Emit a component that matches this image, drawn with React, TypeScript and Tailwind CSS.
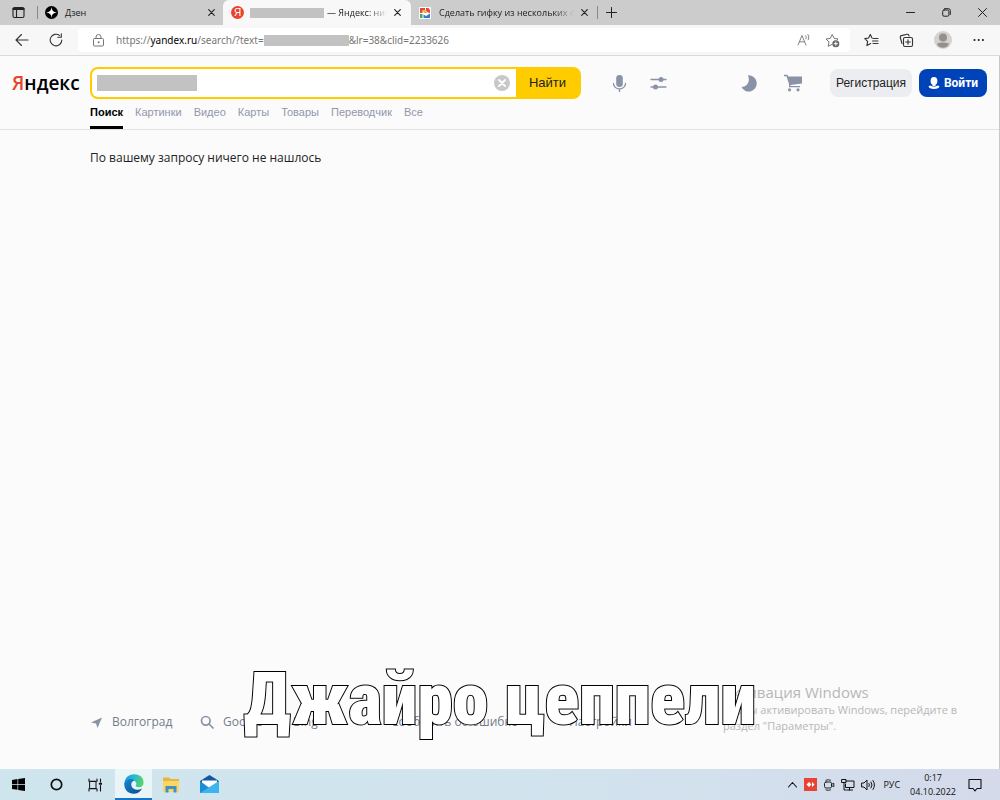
import type { ReactNode } from 'react';

const browserFont = "font-['Open_Sans','Noto_Sans',sans-serif]";
const pageFont = "font-['Liberation_Sans',sans-serif]";

const sections = ['Поиск', 'Картинки', 'Видео', 'Карты', 'Товары', 'Переводчик', 'Все'];

function Icon({ children, size = 16, box = 16, className = '' }: { children: ReactNode; size?: number; box?: number; className?: string }) {
  return (
    <svg
      width={size}
      height={size}
      viewBox={`0 0 ${box} ${box}`}
      fill="none"
      stroke="currentColor"
      strokeLinecap="round"
      strokeLinejoin="round"
      className={`block shrink-0 ${className}`}
    >
      {children}
    </svg>
  );
}

function CloseIcon() {
  return (
    <Icon size={7} box={8}>
      <path d="M.8.8l6.4 6.4M7.2.8L.8 7.2" strokeWidth="1.3" />
    </Icon>
  );
}

function TabBar() {
  return (
    <div className="flex h-[25px] items-center bg-[#cccccc] text-[9px] text-[#222]">
      <button aria-label="Меню вкладок" className="flex w-[37px] justify-center">
        <Icon size={13} box={13}>
          <rect x="1" y="1.5" width="11" height="10" rx="1.5" strokeWidth="1.1" />
          <path d="M1.3 3h10.4" strokeWidth="2" />
          <path d="M4.5 3v8.5" strokeWidth="1.1" />
        </Icon>
      </button>
      <div className="flex w-[186px] items-center border-l border-[#888] pr-2 pl-[7px]">
        <Icon size={13} box={14}>
          <circle cx="7" cy="7" r="7" fill="#000" stroke="none" />
          <path d="M7 1.2C7.2 5 9 6.8 12.8 7 9 7.2 7.2 9 7 12.8 6.8 9 5 7.2 1.2 7 5 6.8 6.8 5 7 1.2z" fill="#fff" stroke="none" />
        </Icon>
        <span className="ml-[7px] flex-1">Дзен</span>
        <button aria-label="Закрыть Дзен">
          <CloseIcon />
        </button>
      </div>
      <div className="flex h-full w-[188px] items-center rounded-t-md bg-[#f8f8f8] pr-[10px] pl-2">
        <span className={`${pageFont} flex size-[13px] shrink-0 items-center justify-center rounded-full bg-[#e8442c] text-[10px] leading-none text-white`}>
          Я
        </span>
        <span className="ml-[6px] h-[10px] w-[74px] shrink-0 bg-[#c2c2c2]" />
        <span className="ml-[3px] flex-1 overflow-hidden whitespace-nowrap [mask-image:linear-gradient(to_right,#000_70%,transparent)]">
          — Яндекс: нич
        </span>
        <button aria-label="Закрыть Яндекс" className="ml-[7px]">
          <CloseIcon />
        </button>
      </div>
      <div className="flex w-[187px] items-center border-r border-[#888] pr-[9px] pl-2">
        <Icon size={12} box={12}>
          <rect width="12" height="12" rx="1" fill="#fff" stroke="none" />
          <path d="M1 1h5v2.500H3.500V6H1z" fill="#e5483a" stroke="none" />
          <path d="M7 1h2.500L11 3v3L9 5.500 7 3.500z" fill="#e5483a" stroke="none" />
          <path d="M4 4l3-1 1.500 3H5z" fill="#f2b32e" stroke="none" />
          <path d="M1 7h2.500v4H1z" fill="#45a869" stroke="none" />
          <path d="M4.500 7.500l2.500 1.500 4-2.500V11H4.500z" fill="#3f76cf" stroke="none" />
        </Icon>
        <span className="ml-2 flex-1 overflow-hidden whitespace-nowrap [mask-image:linear-gradient(to_right,#000_85%,transparent)]">
          Сделать гифку из нескольких фото
        </span>
        <button aria-label="Закрыть вкладку" className="ml-[7px]">
          <CloseIcon />
        </button>
      </div>
      <button aria-label="Новая вкладка" className="ml-2">
        <Icon size={11} box={12}>
          <path d="M6 .5v11M.5 6h11" strokeWidth="1.1" />
        </Icon>
      </button>
      <div className="ml-auto flex">
        <button aria-label="Свернуть" className="flex w-9 justify-center">
          <Icon size={9} box={9}>
            <path d="M.5 4.5h8" />
          </Icon>
        </button>
        <button aria-label="Восстановить" className="flex w-9 justify-center">
          <Icon size={9} box={9}>
            <rect x=".7" y="2" width="6.2" height="6.2" rx="1.3" />
            <path d="M2.5.7h4a1.8 1.8 0 0 1 1.8 1.8v4" />
          </Icon>
        </button>
        <button aria-label="Закрыть" className="flex w-9 justify-center">
          <Icon size={9} box={9}>
            <path d="M.5.5l8 8M8.500.5l-8 8" />
          </Icon>
        </button>
      </div>
    </div>
  );
}

function Toolbar() {
  return (
    <div className="flex h-[31px] items-center border-b border-[#dadada] bg-[#f7f7f7] text-[#333]">
      <button aria-label="Назад" className="ml-[15px]">
        <Icon size={14} box={14}>
          <path d="M13 7H1.200M6.500 1.500L1 7l5.500 5.500" strokeWidth="1.1" />
        </Icon>
      </button>
      <button aria-label="Обновить" className="ml-5">
        <Icon size={14} box={14}>
          <path d="M12.800 7A5.800 5.800 0 1 1 10.500 2.400M12.300.7v3.500H8.800" strokeWidth="1.1" />
        </Icon>
      </button>
      <div className="mr-[14px] ml-[15px] flex h-[24px] flex-1 items-center rounded bg-white px-[14px] text-[#767676]">
        <Icon size={13} box={13}>
          <rect x="1.500" y="4.500" width="10" height="7.500" rx="1" />
          <path d="M4 4.500V3a2.500 2.500 0 0 1 5 0v1.500" />
          <circle cx="6.500" cy="8.200" r=".5" fill="currentColor" />
        </Icon>
        <p className="ml-[11px] flex flex-1 items-center font-['Noto_Sans',sans-serif] text-[10px] whitespace-nowrap">
          https://<span className="text-black">yandex.ru</span>/search/?text=
          <span className="h-[11px] w-[85px] bg-[#c2c2c2]" />
          &amp;lr=38&amp;clid=2233626
        </p>
        <button aria-label="Прочесть вслух" className="mr-[14px]">
          <Icon size={14} box={14}>
            <path d="M1 12L5 2.500 9 12M2.400 8.800h5.200M8.800 2.800q1 1.300.2 3M11 1.500q1.900 2.500.3 5.300" strokeWidth=".9" />
          </Icon>
        </button>
        <button aria-label="Добавить в избранное" className="-mr-1">
          <Icon size={15} box={15}>
            <path d="M12 7l1-1-3.800-.6L7.200 1.500 5.200 5.400 1 6l3 3-.8 4.300L7 11.400" />
            <circle cx="10.800" cy="10.700" r="3.500" fill="#666" stroke="none" />
            <path d="M10.800 9v3.400M9.100 10.700h3.400" stroke="#fff" />
          </Icon>
        </button>
      </div>
      <div className="mr-[14px] flex items-center gap-5">
        <button aria-label="Избранное">
          <Icon size={15} box={15}>
            <path d="M8 5L6.300 1.500 4.600 5 .8 5.600l2.800 2.700-.7 4.300 3.800-2M9 5.500h5M8.500 8h5.500M9 10.500h5" strokeWidth="1.100" />
          </Icon>
        </button>
        <button aria-label="Коллекции">
          <Icon size={15} box={15}>
            <rect x="4.500" y="4.500" width="9" height="9" rx="1.500" strokeWidth="1.100" />
            <path d="M9 6.700v4.600M6.700 9h4.600M3 10.500l-1.700-6A1.500 1.500 0 0 1 2.400 2.600L8 1.300a1.500 1.500 0 0 1 1.800 1l.3.700" strokeWidth="1.100" />
          </Icon>
        </button>
        <button aria-label="Профиль">
          <Icon size={18} box={18}>
            <circle cx="9" cy="9" r="9" fill="#d4d1ce" stroke="none" />
            <circle cx="9" cy="6.500" r="4" fill="#94908d" stroke="none" />
            <path d="M3 12.500q6-2 12 0-1.500 4.300-6 4.300t-6-4.300z" fill="#94908d" stroke="none" />
          </Icon>
        </button>
        <button aria-label="Параметры">
          <Icon size={14} box={14}>
            <g fill="#222" stroke="none">
              <circle cx="2.500" cy="7" r="1.100" />
              <circle cx="6.700" cy="7" r="1.100" />
              <circle cx="10.900" cy="7" r="1.100" />
            </g>
          </Icon>
        </button>
      </div>
    </div>
  );
}

function SearchHeader() {
  return (
    <header className={`${pageFont} border-b border-[#e2e2e2] bg-[#fbfbfb]`}>
      <div className="flex items-center pt-[11px] pr-3 pl-3">
        <a href="#" className="w-[78px] font-['Open_Sans',sans-serif] text-[19px] leading-7 font-semibold text-black">
          <span className="text-[#e8442c]">Я</span>ндекс
        </a>
        <form className="flex h-8 w-[491px] overflow-hidden rounded-lg bg-[#ffcc00] p-[2px]" onSubmit={(e) => e.preventDefault()}>
          <div className="relative flex flex-1 items-center rounded-l-md bg-white pr-[6px] pl-1">
            <input aria-label="Запрос" className="h-full w-full bg-transparent outline-none" />
            <span className="absolute left-[5px] h-4 w-[100px] bg-[#c2c2c2]" />
            <button type="button" aria-label="Очистить">
              <Icon size={16}>
                <circle cx="8" cy="8" r="8" fill="#c8c8c8" stroke="none" />
                <path d="M5 5l6 6M11 5l-6 6" stroke="#fff" strokeWidth="1.800" />
              </Icon>
            </button>
          </div>
          <button className="w-[63px] text-[13px] text-[#222]">Найти</button>
        </form>
        <div className="ml-[30px] flex items-center gap-[22px] text-[#8a92a8]">
          <button aria-label="Голосовой поиск">
            <Icon size={17} box={17}>
              <rect x="5.200" y="0" width="6.600" height="12" rx="3.300" fill="currentColor" stroke="none" />
              <path d="M2.500 8.500a6 5.500 0 0 0 12 0M8.500 14v2.500" strokeWidth="1.300" />
            </Icon>
          </button>
          <button aria-label="Настройки поиска">
            <Icon size={17} box={17}>
              <path d="M1 4.500h15M1 12h15" strokeWidth="1.300" />
              <circle cx="11" cy="4.500" r="2.500" fill="currentColor" stroke="none" />
              <circle cx="5.500" cy="12" r="2.500" fill="currentColor" stroke="none" />
            </Icon>
          </button>
        </div>
        <div className="ml-auto flex items-center text-[#8a92a8]">
          <button aria-label="Тёмная тема" className="mr-[26px]">
            <Icon size={17} box={17}>
              <path d="M7 .3C12 0 15.700 3.700 15.700 8.500a7.900 7.900 0 0 1-15.200 3.200C4.500 12.500 10 8 7 .3z" fill="currentColor" stroke="none" />
            </Icon>
          </button>
          <button aria-label="Корзина" className="mr-7">
            <Icon size={18} box={18}>
              <path d="M0 .8h3.400l.8 1.700H18v7L6.500 11v1H16v1.300H5V10L2.500 2.200H0z" fill="currentColor" stroke="none" />
              <circle cx="5.500" cy="15.800" r="1.600" fill="currentColor" stroke="none" />
              <circle cx="14" cy="15.800" r="1.600" fill="currentColor" stroke="none" />
            </Icon>
          </button>
          <button className="h-7 w-[82px] rounded-lg bg-[#ecedf0] text-[12px] text-[#222]">Регистрация</button>
          <button className="ml-[7px] flex h-7 w-[68px] items-center justify-center gap-1 rounded-lg bg-[#0042b8] font-['Roboto',sans-serif] text-[12px] font-bold text-white">
            <Icon size={12} box={12}>
              <ellipse cx="6" cy="4" rx="3.400" ry="4" fill="#fff" stroke="none" />
              <path d="M4.500 6h3v3h-3zM.5 9.300q2-1.400 3-.2 2.500 1 5 0 1-1.200 3 .2Q11 12 6 12T.5 9.300z" fill="#fff" stroke="none" />
            </Icon>
            Войти
          </button>
        </div>
      </div>
      <nav className="ml-[90px] flex gap-3 text-[11px] leading-[27px] text-[#9297ab]">
        {sections.map((name, i) => (
          <a key={name} href="#" className={i === 0 ? 'border-b-3 border-black font-bold text-black' : ''}>
            {name}
          </a>
        ))}
      </nav>
    </header>
  );
}

function Footer() {
  return (
    <footer className="mt-auto mb-[37px] ml-[90px] flex items-center text-[12px] leading-5 whitespace-nowrap text-[#757b8c]">
      <a href="#" className="flex w-[110px] items-center gap-[9px]">
        <Icon size={13} box={13}>
          <path d="M12 1.500L7.500 12 6 7.500 1 6.500z" fill="#8a92a8" stroke="none" />
        </Icon>
        Волгоград
      </a>
      <a href="#" className="flex w-[93px] items-center gap-[9px]">
        <Icon size={14} box={14} className="text-[#8a92a8]">
          <circle cx="5.800" cy="5.800" r="4.300" strokeWidth="1.700" />
          <path d="M9 9l4 4" strokeWidth="1.700" />
        </Icon>
        Google
      </a>
      <a href="#" className="w-[98px]">Bing</a>
      <a href="#" className="w-[178px]">Сообщить об ошибке</a>
      <a href="#">Настройки</a>
    </footer>
  );
}

function Taskbar() {
  return (
    <div className="flex h-[31px] shrink-0 items-center bg-linear-to-r from-[#cfe5ed] via-[#d1e4ee] to-[#d4daea] text-[#111]">
      <button aria-label="Пуск" className="flex w-[37px] justify-center">
        <Icon size={13} box={13}>
          <path d="M0 1.900L5.500 1v5H0zM6.200.9L13 0v6H6.200zM0 6.800h5.500v5L0 11.100zM6.200 6.800H13V13l-6.800-1z" fill="#000" stroke="none" />
        </Icon>
      </button>
      <button aria-label="Поиск Windows" className="flex w-[38px] justify-center">
        <Icon size={13} box={13}>
          <circle cx="6.500" cy="6.500" r="5.200" strokeWidth="1.700" />
        </Icon>
      </button>
      <button aria-label="Представление задач" className="flex w-[40px] justify-center">
        <Icon size={14} box={14}>
          <path d="M1 1v2.200h8V1M1 13v-2.200h8V13M12.500 1v3M12.500 7.500V13" strokeWidth="1.100" />
          <rect x="2" y="3.500" width="6" height="7" />
          <path d="M11.700 5.700h1.600" strokeWidth="2" />
        </Icon>
      </button>
      <button aria-label="Microsoft Edge" className="flex h-full w-[37px] items-center justify-center border-b-2 border-[#1676c8] bg-[#eaf5f8]">
        <Icon size={20} box={20}>
          <defs>
            <linearGradient id="edgeTop" x1="0" x2="1" y1=".4" y2=".6">
              <stop stopColor="#1b9de2" />
              <stop offset=".5" stopColor="#2bbccb" />
              <stop offset="1" stopColor="#5ed75b" />
            </linearGradient>
            <linearGradient id="edgeBottom" x1="0" x2="1" y1="0" y2="1">
              <stop stopColor="#1688d5" />
              <stop offset="1" stopColor="#0b4a8e" />
            </linearGradient>
          </defs>
          <path d="M.5 9C1.500-3 20-2 19.600 9c-.3 4.700-5.600 5-7.600 3.200-1-.8.7-1.200.3-3C11.500 5.500 3 4.500.5 9z" fill="url(#edgeTop)" stroke="none" />
          <path d="M.3 9C2.500 4.500 8 4.200 10.500 6.500 7.800 7 6.800 9.500 7.500 12c1.400 4 6.500 4.800 10.600 2.500C15 21 6 21.500 2 16 .8 14 .1 12 .3 9z" fill="url(#edgeBottom)" stroke="none" />
        </Icon>
      </button>
      <button aria-label="Проводник" className="flex w-[38px] justify-center">
        <Icon size={18} box={18}>
          <path d="M1 1.500h6L8.500 3H17v12H1z" fill="#e9b63c" stroke="none" />
          <path d="M1 5h16v11H1z" fill="#fbd663" stroke="none" />
          <path d="M3.500 16.500V10h11v6.500h-3V13h-5v3.500z" fill="#3f91c6" stroke="none" />
        </Icon>
      </button>
      <button aria-label="Почта" className="flex w-[39px] justify-center">
        <Icon size={19} box={19}>
          <path d="M0 6l9.500-6L19 6v3H0z" fill="#1557a5" stroke="none" />
          <path d="M2 5.500h15V12H2z" fill="#fff" stroke="none" />
          <path d="M0 6l9.500 7L19 6v12H0z" fill="#1a8dda" stroke="none" />
          <path d="M0 18L19 6v12z" fill="#3db4ee" stroke="none" />
        </Icon>
      </button>
      <div className="mr-[18px] ml-auto flex items-center gap-[6px] text-[9px]">
        <Icon size={11} box={11}>
          <path d="M1.500 8l4-4.500 4 4.500" strokeWidth="1.100" />
        </Icon>
        <Icon size={13} box={13}>
          <rect width="13" height="13" fill="#e94335" stroke="none" />
          <path d="M2.500 6.500L5 4l2.500 2.500L5 9zM8 4l2.500 2.500L8 9z" fill="#fff" stroke="none" />
        </Icon>
        <Icon size={12} box={12}>
          <rect x="1.500" y="3" width="7" height="6" rx="1.500" strokeWidth=".9" />
          <path d="M8.500 5.300l2.300-1v3.400l-2.300-1M3 1.200q2.300-1 4.500 0M3 10.900q2.300 1 4.500 0" strokeWidth=".9" />
        </Icon>
        <Icon size={14} box={14}>
          <path d="M5 3h8v6.500H4.500V6M8.500 9.500V12M6 12h5.500M1 1.500h4v3H1zM3 4.500V12h2" />
        </Icon>
        <Icon size={14} box={14}>
          <path d="M1 5h2l3-3v10L3 9H1zM8 5.500q1 1.500 0 3M10 4q2.200 3 0 6M12 2.500q3 4.500 0 9" />
        </Icon>
        <span className="ml-[2px]">РУС</span>
        <div className="ml-1 text-center leading-[14px]">
          0:17
          <br />
          04.10.2022
        </div>
        <button aria-label="Уведомления" className="ml-[6px]">
          <Icon size={14} box={14}>
            <path d="M1 1.500h12v9H9L7 12.800 5 10.500H1z" strokeWidth="1.100" />
          </Icon>
        </button>
      </div>
    </div>
  );
}

export default function App() {
  return (
    <div className={`${browserFont} relative flex min-h-screen flex-col overflow-hidden bg-[#fbfbfb]`}>
      <TabBar />
      <Toolbar />
      <main className="flex flex-1 flex-col border-r border-[#c8c8c8]">
        <SearchHeader />
        <p className="mt-[18px] ml-[90px] text-[12px] leading-5 text-[#222]">По вашему запросу ничего не нашлось</p>
        <Footer />
      </main>
      <Taskbar />

      {/* Windows activation notice */}
      <div className="absolute right-[41px] bottom-[66px] w-[236px] text-[11px] leading-4 whitespace-nowrap text-[#b7b7b7]">
        <p className="text-[15px] leading-5">Активация Windows</p>
        <p>Чтобы активировать Windows, перейдите в</p>
        <p>раздел "Параметры".</p>
      </div>

      {/* Caption */}
      <h1 className="absolute inset-x-0 bottom-[50px] text-center font-['Roboto_Condensed','Roboto',sans-serif] text-[72px] leading-[100px] font-black whitespace-nowrap text-white [-webkit-text-stroke:2px_#000] [paint-order:stroke_fill]">
        Джайро цеппели
      </h1>
    </div>
  );
}
